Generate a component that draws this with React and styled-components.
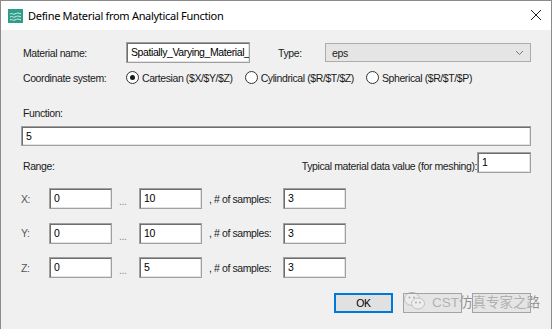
import React from "react";
import styled, { createGlobalStyle } from "styled-components";

const Global = createGlobalStyle`
  html, body { margin: 0; padding: 0; background: #ffffff; }
  body { width: 554px; height: 329px; overflow: hidden; }
`;

const Window = styled.div`
  width: 550px;
  height: 329px;
  border: 1px solid #8a8a8a;
  border-bottom: none;
  background: #f0f0f0;
  font-family: "Liberation Sans", Arial, sans-serif;
  font-size: 10.5px;
  letter-spacing: -0.4px;
  color: #1a1a1a;
  display: flex;
  flex-direction: column;
`;

const TitleBar = styled.div`
  height: 29px;
  background: #ffffff;
  display: flex;
  align-items: center;
  padding-left: 7px;
  position: relative;
`;

const TitleText = styled.span`
  margin-left: 5px;
  font-family: "Noto Sans", "Open Sans", sans-serif;
  font-size: 11px;
  letter-spacing: -0.3px;
  color: #000;
`;

const Close = styled.div`
  position: absolute;
  right: 9px;
  top: 8px;
  width: 12px;
  height: 12px;
`;

const Body = styled.div`
  flex: 1;
  padding: 12px 20px 0 20px;
  display: flex;
  flex-direction: column;
`;

const Row = styled.div`
  display: flex;
  align-items: ${(p) => p.$align || "center"};
  margin-top: ${(p) => p.$top || 0}px;
`;

const Label = styled.span`
  box-sizing: border-box;
  width: ${(p) => (p.$w ? `${p.$w}px` : "auto")};
  padding-left: ${(p) => p.$pl || 0}px;
  color: ${(p) => p.$color || "#1a1a1a"};
  flex: ${(p) => (p.$grow ? 1 : "none")};
  white-space: nowrap;
`;

const Input = styled.div`
  box-sizing: border-box;
  width: ${(p) => (p.$w ? `${p.$w}px` : "auto")};
  flex: ${(p) => (p.$grow ? 1 : "none")};
  height: ${(p) => p.$h || 21}px;
  background: #ffffff;
  border: 1px solid #a0a0a0;
  box-shadow: inset 1px 1px 0 #6e6e6e, inset -1px -1px 0 #e3e3e3;
  padding: 2px 0 0 4px;
  color: #000;
  white-space: nowrap;
  overflow: hidden;
  line-height: 14px;
`;

const Select = styled.div`
  box-sizing: border-box;
  flex: 1;
  height: 19px;
  background: #e5e5e5;
  border: 1px solid #adadad;
  display: flex;
  align-items: center;
  justify-content: space-between;
  padding: 0 6px;
  color: #222;
`;

const Radios = styled.div`
  display: flex;
  align-items: center;
  gap: 12px;
`;

const RadioItem = styled.label`
  display: flex;
  align-items: center;
  gap: 3px;
  white-space: nowrap;
`;

const RadioDot = styled.span`
  box-sizing: border-box;
  width: 13px;
  height: 13px;
  border-radius: 50%;
  border: 1px solid #333;
  background: #fff;
  display: flex;
  align-items: center;
  justify-content: center;
  &::after {
    content: "";
    width: 5px;
    height: 5px;
    border-radius: 50%;
    background: ${(p) => (p.$on ? "#1a1a1a" : "transparent")};
  }
`;

const RangeGrid = styled.div`
  display: grid;
  grid-template-columns: 28px 63px 27px 63px 81px 63px;
  grid-auto-rows: 21px;
  row-gap: 13.5px;
  align-items: center;
  margin-top: 15px;
`;

const Dots = styled.span`
  color: #8a8a8a;
  padding-left: 7px;
  padding-top: 5px;
`;

const Footer = styled.div`
  display: grid;
  grid-template-columns: 59px 59px 59px;
  column-gap: 10px;
  justify-content: end;
  margin-top: 15px;
  position: relative;
`;

const PushButton = styled.div`
  box-sizing: border-box;
  height: 20px;
  position: relative;
  z-index: 1;
  background: ${(p) => (p.$primary ? "#e1e1e1" : "rgba(215, 215, 215, 0.45)")};
  border: ${(p) => (p.$primary ? "2px solid #0078d7" : "1px solid #a3a3a3")};
  display: flex;
  align-items: center;
  justify-content: center;
  color: #000;
`;

const Watermark = styled.div`
  position: absolute;
  z-index: 0;
  left: 383px;
  top: -2px;
  display: flex;
  align-items: center;
  gap: 6px;
  font-family: "Liberation Sans", "Noto Sans CJK SC", sans-serif;
  font-size: 13.5px;
  letter-spacing: 0;
  color: #8f8f8f;
  text-shadow: 0 0 1px #fff;
  white-space: nowrap;
  pointer-events: none;
`;

function AppIcon() {
  return (
    <svg width="15" height="14" viewBox="0 0 15 14">
      <rect width="15" height="14" fill="#2e9e8a" />
      <path d="M2 5c2-1.5 3 1 5 0s3-1.5 6 0" stroke="#d8f1ea" strokeWidth="1" fill="none" />
      <path d="M2 8c2-1.5 3 1 5 0s3-1.5 6 0" stroke="#d8f1ea" strokeWidth="1" fill="none" />
      <path d="M2 11c2-1.5 3 1 5 0s3-1.5 6 0" stroke="#d8f1ea" strokeWidth="1" fill="none" />
    </svg>
  );
}

function WeChat() {
  return (
    <svg width="22" height="20" viewBox="0 0 22 20">
      <ellipse cx="8" cy="8" rx="7.5" ry="6.5" fill="#fff" stroke="#9a9a9a" strokeWidth="0.8" />
      <ellipse cx="14" cy="12.5" rx="6.5" ry="5.5" fill="#fff" stroke="#9a9a9a" strokeWidth="0.8" />
      <circle cx="5.5" cy="6.5" r="1" fill="#8a8a8a" />
      <circle cx="10" cy="6.5" r="1" fill="#8a8a8a" />
      <circle cx="12" cy="11.5" r="0.9" fill="#8a8a8a" />
      <circle cx="16" cy="11.5" r="0.9" fill="#8a8a8a" />
    </svg>
  );
}

const ranges = [
  { axis: "X:", from: "0", to: "10", n: "3" },
  { axis: "Y:", from: "0", to: "10", n: "3" },
  { axis: "Z:", from: "0", to: "5", n: "3" },
];

export default function App() {
  return (
    <>
      <Global />
      <Window>
        <TitleBar>
          <AppIcon />
          <TitleText>Define Material from Analytical Function</TitleText>
          <Close>
            <svg width="12" height="12" viewBox="0 0 12 12">
              <path d="M1 1L11 11M11 1L1 11" stroke="#222" strokeWidth="1" />
            </svg>
          </Close>
        </TitleBar>
        <Body>
          <Row>
            <Label $w={105} $pl={2}>Material name:</Label>
            <Input $w={124}>Spatially_Varying_Material_</Input>
            <Label $w={75} $pl={28}>Type:</Label>
            <Select>
              <span>eps</span>
              <svg width="9" height="6" viewBox="0 0 9 6">
                <path d="M1 1l3.5 3.5L8 1" stroke="#777" strokeWidth="1" fill="none" />
              </svg>
            </Select>
          </Row>
          <Row $top={8}>
            <Label $w={105} $pl={2}>Coordinate system:</Label>
            <Radios>
              <RadioItem><RadioDot $on />Cartesian ($X/$Y/$Z)</RadioItem>
              <RadioItem><RadioDot />Cylindrical ($R/$T/$Z)</RadioItem>
              <RadioItem><RadioDot />Spherical ($R/$T/$P)</RadioItem>
            </Radios>
          </Row>
          <Row $top={23}>
            <Label $pl={2}>Function:</Label>
          </Row>
          <Row $top={7}>
            <Input $grow $h={20}>5</Input>
          </Row>
          <Row $top={6} $align="flex-end">
            <Label $pl={2} $grow style={{ paddingBottom: 1 }}>Range:</Label>
            <Label style={{ paddingBottom: 1 }}>Typical material data value (for meshing):</Label>
            <Input $w={54}>1</Input>
          </Row>
          <RangeGrid>
            {ranges.map((r) => (
              <React.Fragment key={r.axis}>
                <Label $color="#555">{r.axis}</Label>
                <Input>{r.from}</Input>
                <Dots>...</Dots>
                <Input>{r.to}</Input>
                <Label $pl={7}>, # of samples:</Label>
                <Input>{r.n}</Input>
              </React.Fragment>
            ))}
          </RangeGrid>
          <Footer>
            <PushButton $primary>OK</PushButton>
            <PushButton aria-label="Cancel" />
            <PushButton aria-label="Help" />
            <Watermark>
              <WeChat />
              <span>CST仿真专家之路</span>
            </Watermark>
          </Footer>
        </Body>
      </Window>
    </>
  );
}
